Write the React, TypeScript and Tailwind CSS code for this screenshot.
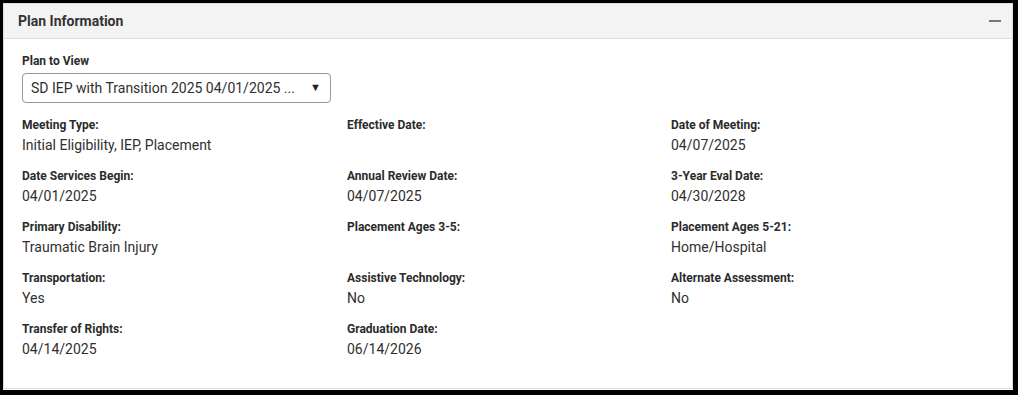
const fields: { label: string; value: string }[] = [
  { label: 'Meeting Type:', value: 'Initial Eligibility, IEP, Placement' },
  { label: 'Effective Date:', value: '' },
  { label: 'Date of Meeting:', value: '04/07/2025' },
  { label: 'Date Services Begin:', value: '04/01/2025' },
  { label: 'Annual Review Date:', value: '04/07/2025' },
  { label: '3-Year Eval Date:', value: '04/30/2028' },
  { label: 'Primary Disability:', value: 'Traumatic Brain Injury' },
  { label: 'Placement Ages 3-5:', value: '' },
  { label: 'Placement Ages 5-21:', value: 'Home/Hospital' },
  { label: 'Transportation:', value: 'Yes' },
  { label: 'Assistive Technology:', value: 'No' },
  { label: 'Alternate Assessment:', value: 'No' },
  { label: 'Transfer of Rights:', value: '04/14/2025' },
  { label: 'Graduation Date:', value: '06/14/2026' },
]

const Field = ({ label, value }: { label: string; value: string }) => (
  <div className="flex flex-col">
    <div className="h-4 text-[12px] leading-4 font-bold text-[#2b2b2b]">{label}</div>
    <div className="h-5 mt-[2px] text-[14px] leading-5 text-[#2f2f2f]">{value}</div>
  </div>
)

export default function App() {
  return (
    <div
      className="w-[1021px] h-[399px] bg-white"
      style={{ fontFamily: 'Roboto, "Liberation Sans", sans-serif' }}
    >
      <div className="w-[1018px] h-[395px] border-t-[3px] border-l-[3px] border-r-[5px] border-b-[5px] border-black">
        <div className="h-[386px] border border-[#dcdcdc] bg-white">
          <div className="h-[35px] bg-[#f3f3f3] border-b border-[#dcdcdc] flex items-center justify-between pl-[14px] pr-[10px]">
            <span className="text-[14px] font-bold text-[#333]">Plan Information</span>
            <span className="block w-[12px] h-[2px] bg-[#777] mr-[1px]" />
          </div>
          <div className="px-[18px] pt-[14px]">
            <div className="text-[12px] leading-4 font-bold text-[#2b2b2b]">Plan to View</div>
            <div className="mt-[4px] w-[309px] h-[30px] border border-[#999] rounded-[4px] flex items-center justify-between pl-[8px] pr-[9px]">
              <span className="text-[14px] text-[#2f2f2f]">SD IEP with Transition 2025 04/01/2025 ...</span>
              <span className="text-[11px] text-[#222]">▼</span>
            </div>
            <div className="mt-[14px] grid grid-cols-[325px_324px_1fr] gap-y-[13px]">
              {fields.map((f) => (
                <Field key={f.label} label={f.label} value={f.value} />
              ))}
            </div>
          </div>
        </div>
      </div>
    </div>
  )
}
